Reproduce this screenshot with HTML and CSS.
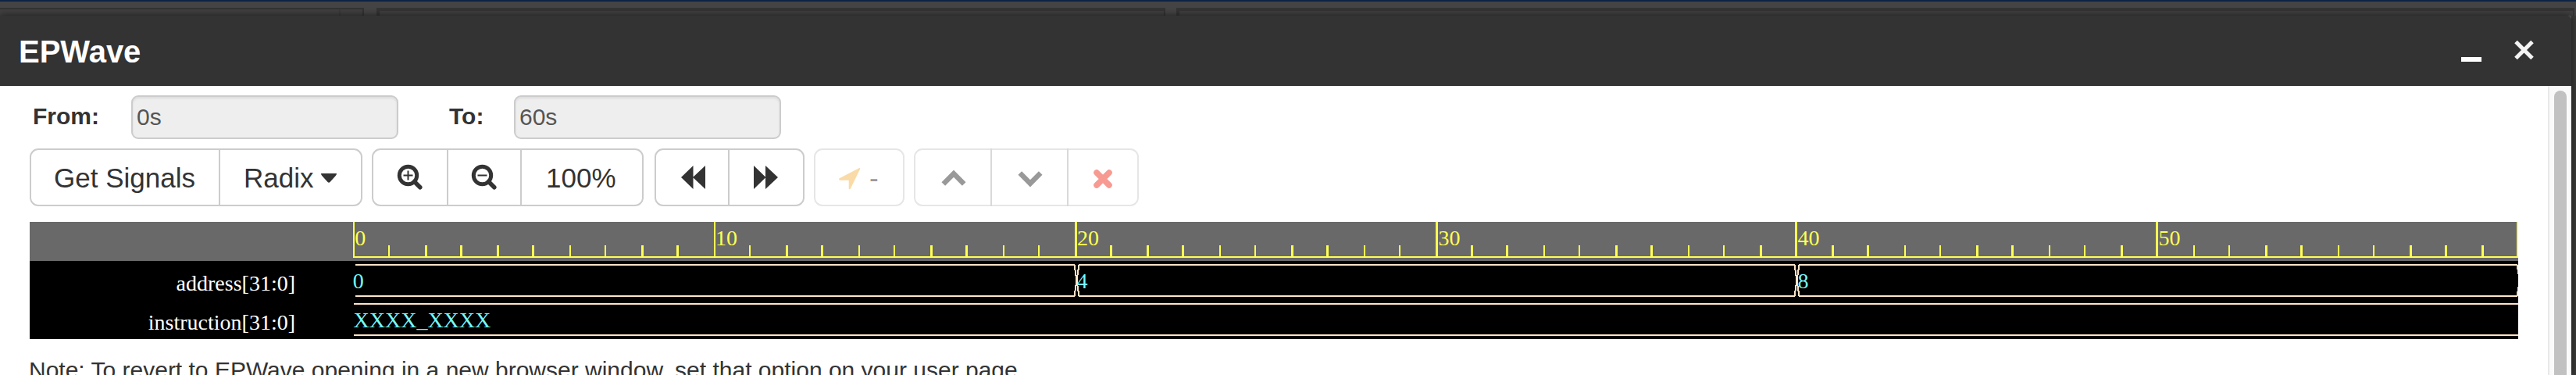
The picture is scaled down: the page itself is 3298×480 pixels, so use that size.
FILE: index.html
```html
<!DOCTYPE html>
<html lang="en">
<head>
<meta charset="utf-8">
<title>EPWave</title>
<link rel="stylesheet" href="styles.css">
</head>
<body>
<div class="backdrop">
  <div class="strip"></div>
  <div class="panes">
    <div class="pane pane-side"><i class="pane-split"></i></div>
    <div class="pane pane-editor"></div>
    <div class="pane pane-editor pane-last"></div>
  </div>
</div>
<main class="window">
  <header class="titlebar">
    <h1 class="title">EPWave</h1>
    <svg class="winctl" width="100" height="40" viewBox="0 0 100 40">
      <rect x="1" y="24" width="26" height="6" fill="#fff"/>
      <path d="M71 4.500 92 25.500M92 4.500 71 25.500" stroke="#f4f4f4" stroke-width="5" fill="none"/>
    </svg>
  </header>
  <div class="body">
    <div class="content">
      <div class="range">
        <label class="lbl from">From:</label><div class="field">0s</div>
        <label class="lbl to">To:</label><div class="field">60s</div>
      </div>
      <div class="toolbar">
        <div class="group g1">
          <div class="btn b-get"><span class="t-get">Get Signals</span></div>
          <div class="btn b-radix"><span class="t-radix">Radix</span><svg class="caret" width="20" height="12"><path d="M0 0H20Q20 2 18.500 3.300L11.500 11Q10 12.500 8.500 11L1.500 3.300Q0 2 0 0Z" fill="#333"/></svg></div>
        </div>
        <div class="group g2">
          <div class="btn b-zin"><svg width="34" height="34"><circle cx="14.500" cy="14.500" r="11.200" class="lens"/><path d="M22.500 22.500 29.800 29.800" class="handle"/><path d="M8.500 14.500H20.500M14.500 8.500V20.500" class="sign"/></svg></div>
          <div class="btn b-zout"><svg width="34" height="34"><circle cx="14.500" cy="14.500" r="11.200" class="lens"/><path d="M22.500 22.500 29.800 29.800" class="handle"/><path d="M8.500 14.500H20.500" class="sign"/></svg></div>
          <div class="btn b-pct"><span class="t-pct">100%</span></div>
        </div>
        <div class="group g3">
          <div class="btn b-rew"><svg width="32" height="30"><path d="M0 15 15.500 0V30ZM15 15 31 0V30Z" fill="#333"/></svg></div>
          <div class="btn b-fwd"><svg width="32" height="30"><path d="M0 0 15.500 15 0 30ZM15 0 31 15 15 30Z" fill="#333"/></svg></div>
        </div>
        <div class="group g4 off">
          <div class="btn b-loc"><svg width="28" height="28"><path d="M26.500 .8 14 26.500H13.500V15H1.200L1 14Z" fill="#fadba7" stroke="#fadba7" stroke-width="1.600" stroke-linejoin="round"/></svg><span class="t-dash">-</span></div>
        </div>
        <div class="group g5 off">
          <div class="btn b-up"><svg width="32" height="22"><path d="M2.800 17.500 16 4.200 29.200 17.500" class="chev"/></svg></div>
          <div class="btn b-down"><svg width="32" height="22"><path d="M2.800 3.500 16 16.800 29.200 3.500" class="chev"/></svg></div>
          <div class="btn b-del"><svg width="24" height="24"><path d="M4 4 20 20M20 4 4 20" stroke="#f79a92" stroke-width="7.500" stroke-linecap="round"/></svg></div>
        </div>
      </div>
      <svg class="wave" width="3186" height="150" viewBox="38 284 3186 150">
        <rect x="38" y="284" width="3186" height="150"/>
        <rect x="38" y="284" width="3186" height="50" fill="#696969"/>
        <rect x="453" y="328" width="2771" height="2" class="yellow"/>
        <g id="ticks" class="yellow"></g>
        <g class="yellow">
          <text x="454.300" y="314">0</text><text x="916" y="314">10</text><text x="1379" y="314">20</text><text x="1841.500" y="314">30</text><text x="2301.500" y="314">40</text><text x="2763.500" y="314">50</text>
        </g>
        <g class="white"><text x="378" y="371.500">address[31:0]</text><text x="378" y="421.500">instruction[31:0]</text></g>
        <path class="trace" d="M455 339H1375.500L1381.500 379H2297.500L2303.500 339H3222.500L3226 359L3222.500 379H2303.500L2297.500 339H1381.500L1375.500 379H455M453 389H3224M453 429H3224"/>
        <g class="cyan"><text x="451.700" y="369">0</text><text x="1378.500" y="369">4</text><text x="2301.500" y="369">8</text><text x="452.500" y="419">XXXX_XXXX</text></g>
      </svg>
      <p class="note">Note: To revert to EPWave opening in a new browser window, set that option on your user page.</p>
    </div>
    <div class="scroll"><div class="thumb"></div></div>
  </div>
</main>
<script src="ticks.js"></script>
</body>
</html>
```
FILE: styles.css
```css
* { box-sizing: border-box; }
body { margin: 0; height: 480px; overflow: hidden; position: relative; background: #3a3a39; font-family: "Liberation Sans", Arial, sans-serif; color: #333; }
.backdrop { height: 20px; overflow: hidden; border-top: 2px solid #0c2344; background: #444; }
.strip { height: 8px; }
.panes { display: flex; height: 10px; }
.pane { border-top: 2px solid #333; background: #404040; height: 10px; }
.pane-side { width: 466px; margin-right: 16px; border-right: 2px solid #333; display: flex; }
.pane-split { margin-left: 434px; width: 2px; background: #393939; }
.pane-editor { width: 1010px; border: 4px solid #343434; border-bottom: 0; margin-right: 14px; border-right-width: 2px; }
.pane-last { width: auto; flex: 1; margin-right: 2px; }
.window { position: relative; width: 3292px; height: 460px; box-shadow: 0 0 10px rgba(0,0,0,.6); background: #fff; border-top-right-radius: 4px; }
.titlebar { height: 90px; background: #333; border-top-right-radius: 4px; display: flex; justify-content: space-between; align-items: flex-start; padding: 23px 42px 0 24px; }
.title { margin: 0; font-size: 40px; line-height: 46px; color: #fff; }
.winctl { margin: 6px 0 0; }
.body { display: flex; height: 370px; overflow: hidden; }
.content { flex: 1; padding: 12px 0 0 38px; }
.range { display: flex; height: 56px; font-size: 30px; line-height: 54px; }
.lbl { font-weight: bold; }
.from { width: 130px; padding-left: 4px; }
.to { width: 148px; padding-left: 65px; }
.field { width: 342px; height: 56px; border: 2px solid #ccc; border-radius: 9px; background: #eee; color: #555; padding-left: 5px; line-height: 52px; box-shadow: inset 0 2px 3px rgba(0,0,0,.075); }
.toolbar { display: flex; margin-top: 12px; height: 74px; font-size: 35px; }
.group { display: flex; height: 74px; border: 2px solid #ccc; border-radius: 11px; }
.btn { display: flex; align-items: center; line-height: 70px; white-space: nowrap; }
.btn span { padding-top: 2px; line-height: 68px; }
.btn + .btn { border-left: 2px solid #ccc; }
.off { border-color: #e6e6e6; }
.off .btn + .btn { border-color: #d9d9d9; margin: -2px 0; }
.g1 { width: 426px; margin-right: 12px; }
.g2 { width: 348px; margin-right: 14px; }
.g3 { width: 192px; margin-right: 12px; }
.g4 { width: 116px; margin-right: 12px; }
.g5 { width: 288px; }
.b-get { width: 240px; padding-left: 29px; }
.b-radix { flex: 1; padding-left: 30px; }
.caret { margin-left: 10px; margin-top: 2px; }
.b-zin { width: 94px; padding-left: 30px; }
.b-zout { width: 94px; padding-left: 29px; }
.b-pct { flex: 1; padding-left: 31px; }
.b-rew { width: 92px; padding-left: 32px; }
.b-fwd { flex: 1; padding-left: 31px; }
.b-loc { padding-left: 30px; }
.t-dash { color: #999; margin-left: 11px; }
.b-up { width: 96px; padding-left: 33px; }
.b-down { width: 98px; padding-left: 33px; }
.b-del { flex: 1; padding-left: 32px; }
.b-loc svg, .b-up svg, .b-down svg, .b-del svg { margin-top: 3px; }
.lens { fill: none; stroke: #333; stroke-width: 5; }
.handle { stroke: #333; stroke-width: 5.5; stroke-linecap: round; }
.sign { stroke: #333; stroke-width: 2; fill: none; }
.chev { fill: none; stroke: #999; stroke-width: 6.5; }
.wave { display: block; margin-top: 20px; font-family: "Liberation Serif", "Times New Roman", serif; font-size: 28px; }
.yellow { fill: #ffff54; }
.white { fill: #fff; text-anchor: end; }
.cyan { fill: #73fbfd; }
.trace { fill: none; stroke: #fde4c7; stroke-width: 2; shape-rendering: crispEdges; }
.note { margin: 20px 0 0 -1px; font-size: 30px; line-height: 40px; white-space: nowrap; }
.scroll { width: 30px; border-left: 2px solid #e8e8e8; border-right: 2px solid #f0f0f0; background: #fafafa; padding: 6px 4px 0 6px; }
.thumb { width: 16px; height: 400px; border-radius: 8px; background: #c1c1c1; }
```
FILE: ticks.js
```js
// Ruler marks: one per second, full height every ten seconds.
const ticks = document.getElementById('ticks');
for (let i = 0; i <= 60; i++) {
  const n = Math.round(1109 * i / 60);
  const pos = 452 + n * 2.4985 + 0.1;
  const start = Math.floor(pos);
  const frac = pos - start;
  const major = i % 10 === 0;
  const r = document.createElementNS('http://www.w3.org/2000/svg', 'rect');
  r.setAttribute('x', start);
  r.setAttribute('y', major ? 284 : 314);
  r.setAttribute('width', frac > 0.49 ? 3 : 2);
  r.setAttribute('height', major ? 46 : 16);
  ticks.appendChild(r);
}
```
